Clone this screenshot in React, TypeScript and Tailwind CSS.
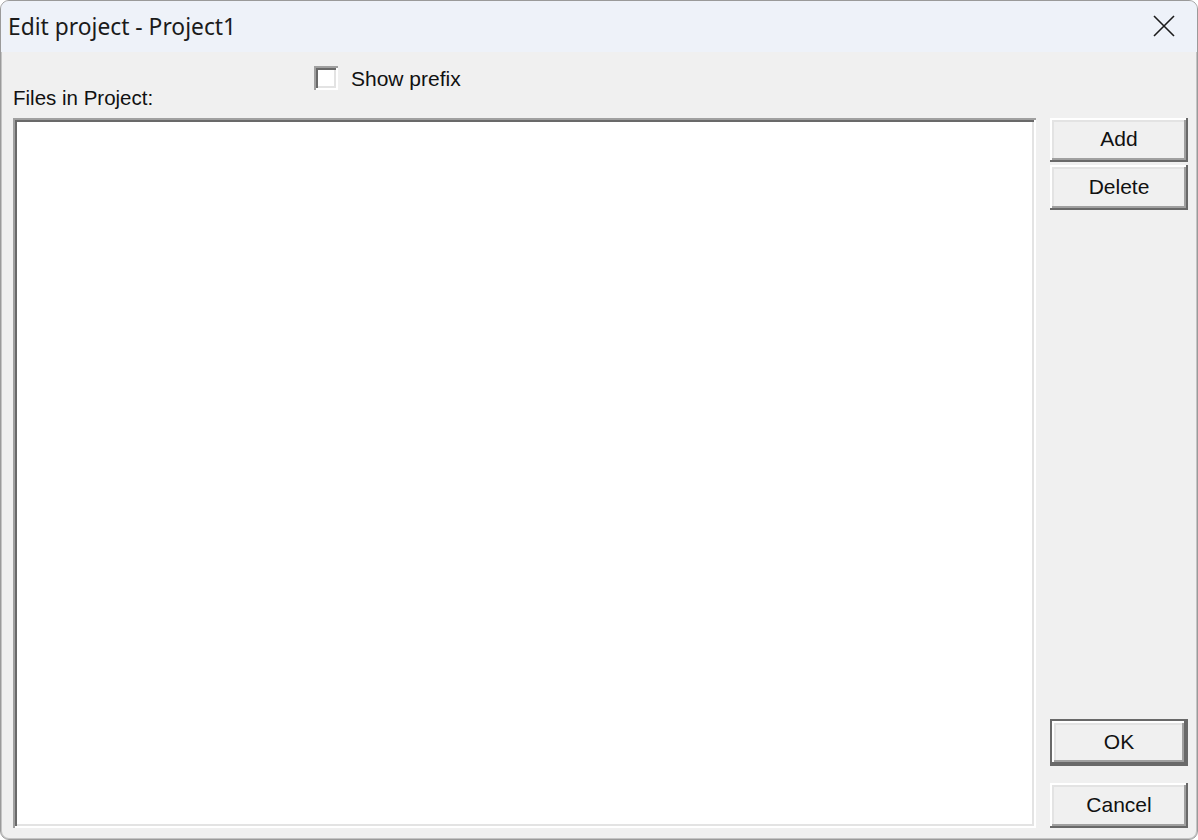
import React from "react";

const sunken =
  "shadow-[inset_2px_2px_0_#a0a0a0,inset_-2px_-2px_0_#ffffff,inset_4px_4px_0_#696969,inset_-4px_-4px_0_#e3e3e3]";
const raised =
  "shadow-[inset_-2px_-2px_0_#696969,inset_2px_2px_0_#ffffff,inset_-4px_-4px_0_#a0a0a0,inset_4px_4px_0_#e3e3e3]";
const raisedDefault =
  "shadow-[inset_0_0_0_2px_#696969,inset_-4px_-4px_0_#696969,inset_4px_4px_0_#ffffff,inset_-6px_-6px_0_#a0a0a0,inset_6px_6px_0_#e3e3e3]";

function Btn({ label, def, h = "h-[45px]" }: { label: string; def?: boolean; h?: string }) {
  return (
    <div
      className={`w-[138px] ${h} bg-[#f0f0f0] flex items-center justify-center text-[21px] text-[#111]  ${
        def ? raisedDefault : raised
      }`}
      style={{ fontFamily: '"Liberation Sans", Arial, sans-serif' }}
    >
      <span className="-mt-[2px]">{label}</span>
    </div>
  );
}

export default function App() {
  return (
    <div className="w-[1198px] h-[840px] bg-white">
      <div
        className="w-[1198px] h-[840px] rounded-[9px] border border-[#9a9a9a] overflow-hidden bg-[#f0f0f0] flex flex-col shadow-[inset_0_0_0_1px_#c4c4c4]"
        style={{ fontFamily: '"Liberation Sans", Arial, sans-serif' }}
      >
        {/* title bar */}
        <div className="h-[51px] shrink-0 bg-[#eef2f9] flex items-center pl-[7px] pr-[22px]">
          <span
            className="text-[22.8px] text-[#1b1b1b] mt-[2px]"
            style={{ fontFamily: '"Noto Sans", "Open Sans", sans-serif' }}
          >
            Edit project - Project1
          </span>
          <div className="ml-auto w-[22px] h-[22px] -mt-[2px]">
            <svg width="22" height="22" viewBox="0 0 22 22">
              <path d="M1 1 L21 21 M21 1 L1 21" stroke="#1b1b1b" strokeWidth="1.6" fill="none" />
            </svg>
          </div>
        </div>

        {/* body */}
        <div className="flex-1 flex flex-col pl-[12px] pr-[9px] pb-[11px]">
          <div className="h-[66px] shrink-0 flex">
            <span className="w-[301px] pt-[34px] text-[20.5px] leading-[24px] text-[#111]">
              Files in Project:
            </span>
            <div className="pt-[14px] flex items-start">
              <div className={`w-[24px] h-[24px] bg-white ${sunken}`} />
              <span className="ml-[13px] text-[21px] leading-[24px] mt-[1px] text-[#111]">Show prefix</span>
            </div>
          </div>
          <div className="flex-1 flex gap-[14px]">
            <div className={`w-[1024px] h-[710px] bg-white ${sunken}`} />
            <div className="flex flex-col">
              <div className="flex flex-col gap-[3px]">
                <Btn label="Add" h="h-[44px]" />
                <Btn label="Delete" h="h-[45px]" />
              </div>
              <div className="mt-auto flex flex-col gap-[17px]">
                <Btn label="OK" def h="h-[47px]" />
                <Btn label="Cancel" h="h-[45px]" />
              </div>
            </div>
          </div>
        </div>
      </div>
    </div>
  );
}
